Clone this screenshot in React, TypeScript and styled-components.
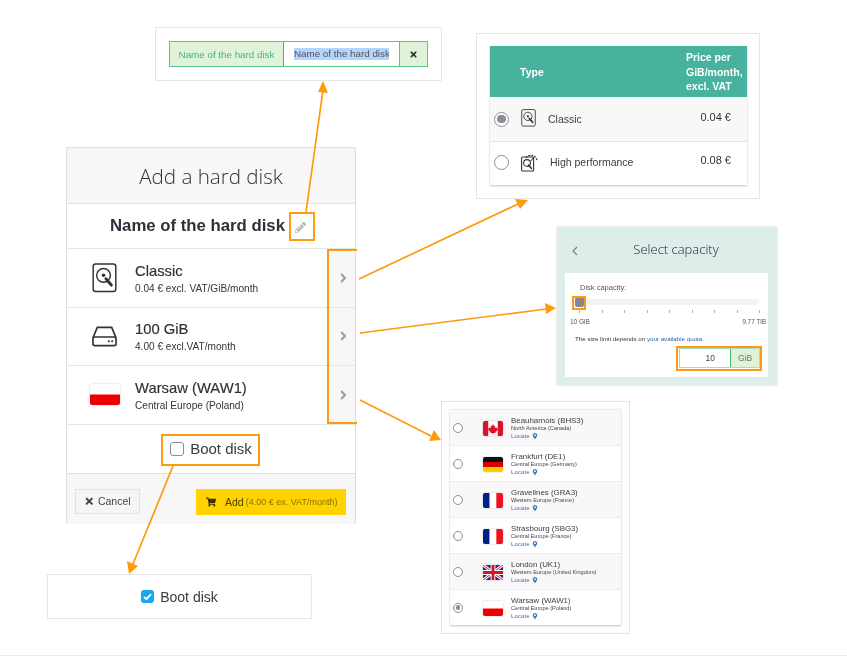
import styled, { createGlobalStyle } from "styled-components";
import { FaMapMarkerAlt, FaPencilAlt, FaShoppingCart, FaTimes } from "react-icons/fa";

const GlobalStyle = createGlobalStyle`
  html, body { margin: 0; padding: 0; background: #fff; }
  body { font-family: "Liberation Sans", Arial, sans-serif; color: #333; }
`;

const Canvas = styled.div`
  position: relative;
  width: 847px;
  height: 658px;
  overflow: hidden;
  background: #fff;
  filter: blur(0.3px);
`;

const PageRule = styled.div`
  position: absolute;
  left: 0;
  right: 0;
  top: 655px;
  height: 1px;
  background: #ebebeb;
`;

const Arrows = styled.svg`
  position: absolute;
  left: 0;
  top: 0;
  z-index: 3;
  pointer-events: none;
`;

/* ---- rename panel ---- */
const RenamePanel = styled.div`
  position: absolute;
  left: 155px;
  top: 27px;
  width: 287px;
  height: 54px;
  box-sizing: border-box;
  border: 1px solid #e3e8e6;
  border-right-color: #dcefe9;
  display: flex;
  align-items: center;
  padding-left: 13px;
`;

const RenameGroup = styled.div`
  display: flex;
  width: 259px;
  height: 26px;
  box-sizing: border-box;
  border: 1.5px solid #5cc48d;
  font-size: 9.8px;
`;

const RenameLabel = styled.div`
  width: 114px;
  flex: none;
  background: #dff3d8;
  color: #41b57e;
  display: flex;
  align-items: center;
  justify-content: center;
  border-right: 1.5px solid #3fb67a;
  box-sizing: border-box;
`;

const RenameInput = styled.div`
  width: 116px;
  flex: none;
  display: flex;
  align-items: center;
  padding-left: 10px;
  box-sizing: border-box;
  overflow: hidden;
  white-space: nowrap;
  color: #555;
  border-right: 1.5px solid #5cc48d;
`;

const Selection = styled.span`
  background: #b3d4fc;
  line-height: 12px;
  width: 95px;
  overflow: hidden;
  display: block;
`;

const RenameClose = styled.div`
  flex: 1;
  background: #dff3d8;
  display: flex;
  align-items: center;
  justify-content: center;
  font-size: 9px;
  color: #333;
`;

/* ---- type table ---- */
const TypePanel = styled.div`
  position: absolute;
  left: 476px;
  top: 33px;
  width: 284px;
  height: 166px;
  box-sizing: border-box;
  border: 1px solid #dde7e4;
  padding: 12px 12px 0 13px;
`;

const TypeTable = styled.div`
  width: 257px;
  box-shadow: 0 1px 2px rgba(0, 0, 0, 0.25);
`;

const TypeHeader = styled.div`
  height: 51px;
  box-sizing: border-box;
  background: #47b29d;
  color: #fff;
  font-size: 10.5px;
  font-weight: 700;
  line-height: 14.5px;
  display: flex;
  align-items: center;
  justify-content: space-between;
  padding: 1px 0 0 30px;
`;

const HeaderPrice = styled.div`
  width: 61px;
`;

const TypeRow = styled.div<{ $alt?: boolean }>`
  height: 44px;
  box-sizing: border-box;
  background: ${(p) => (p.$alt ? "#fff" : "#f8f8f8")};
  border-top: ${(p) => (p.$alt ? "1px solid #e4e4e4" : "0")};
  display: flex;
  align-items: center;
  padding-left: 4px;
  padding-bottom: ${(p) => (p.$alt ? "3px" : "0")};
  font-size: 10.5px;
  color: #3c3c46;
`;

const RowIcon = styled.div`
  width: 17px;
  height: 20px;
  margin-left: 12px;
  flex: none;
`;

const TypeName = styled.div<{ $wide?: boolean }>`
  flex: 1;
  margin-left: ${(p) => (p.$wide ? "12px" : "10px")};
`;

const TypePrice = styled.div`
  width: 42px;
  margin-right: 16px;
  padding-bottom: 4px;
  text-align: right;
  font-size: 11px;
  color: #333;
`;

const Radio = styled.span<{ $size: number; $checked?: boolean }>`
  box-sizing: border-box;
  flex: none;
  display: flex;
  align-items: center;
  justify-content: center;
  width: ${(p) => p.$size}px;
  height: ${(p) => p.$size}px;
  border: 1.5px solid #8b8d9d;
  border-radius: 50%;
  background: #fff;
  &::after {
    content: "";
    display: ${(p) => (p.$checked ? "block" : "none")};
    width: 62%;
    height: 62%;
    border-radius: 50%;
    background: #8b8d9d;
  }
`;

/* ---- main dialog ---- */
const Dialog = styled.div`
  position: absolute;
  left: 66px;
  top: 147px;
  width: 290px;
  height: 377px;
  box-sizing: border-box;
  border: 1px solid #dedede;
  border-bottom: 0;
  display: flex;
  flex-direction: column;
`;

const DialogTitle = styled.div`
  height: 56px;
  flex: none;
  box-sizing: border-box;
  background: #f7f7f7;
  border-bottom: 1px solid #e4e4e4;
  display: flex;
  align-items: center;
  justify-content: center;
  font-family: "Open Sans", sans-serif;
  font-weight: 300;
  font-size: 20.6px;
  color: #30303e;
`;

const NameRow = styled.div`
  height: 45px;
  flex: none;
  box-sizing: border-box;
  border-bottom: 1px solid #e4e4e4;
  display: flex;
  align-items: center;
  padding-left: 43px;
  font-size: 16.75px;
  font-weight: 700;
  color: #30303a;
`;

const NamePencil = styled.span`
  display: flex;
  margin-left: 10px;
  margin-top: 3px;
  font-size: 11px;
  color: #b9b9b9;
`;

const ChoiceRow = styled.div`
  height: 58.5px;
  flex: none;
  box-sizing: border-box;
  border-bottom: 1px solid #e6e6e6;
  display: flex;
  align-items: stretch;
`;

const ChoiceIcon = styled.div`
  width: 68px;
  flex: none;
  display: flex;
  align-items: center;
  justify-content: center;
  padding-left: 7px;
  box-sizing: border-box;
`;

const ChoiceText = styled.div`
  flex: 1;
  display: flex;
  flex-direction: column;
  justify-content: center;
  padding-top: 2px;
`;

const ChoiceTitle = styled.div`
  font-size: 14.8px;
  line-height: 19px;
  color: #2f2f38;
  -webkit-text-stroke: 0.15px #2f2f38;
`;

const ChoiceSub = styled.div`
  font-size: 10.1px;
  line-height: 15px;
  color: #33333c;
`;

const ChoiceArrow = styled.div`
  width: 27px;
  flex: none;
  background: #f7f7f7;
  display: flex;
  align-items: center;
  justify-content: center;
  padding-left: 3px;
  box-sizing: border-box;
`;

const BootRow = styled.div`
  height: 49px;
  flex: none;
  box-sizing: border-box;
  border-bottom: 1px solid #e0e0e0;
  display: flex;
  align-items: center;
  justify-content: center;
  gap: 6px;
  font-size: 15px;
  color: #3a3a45;
`;

const Unchecked = styled.span`
  width: 14px;
  height: 14px;
  box-sizing: border-box;
  border: 1.5px solid #8b8d9d;
  border-radius: 3px;
`;

const DialogFooter = styled.div`
  flex: 1;
  background: #f7f7f7;
  display: flex;
  align-items: flex-start;
  justify-content: space-between;
  padding: 15px 9px 0 8px;
`;

const CancelButton = styled.div`
  width: 65px;
  height: 25px;
  box-sizing: border-box;
  background: #f5f5f5;
  border: 1px solid #e2e2e2;
  display: flex;
  align-items: center;
  justify-content: center;
  gap: 3px;
  font-size: 10.5px;
  color: #444;
`;

const AddButton = styled.div`
  width: 150px;
  height: 26px;
  background: #ffd200;
  display: flex;
  align-items: center;
  padding-left: 10px;
  box-sizing: border-box;
  font-size: 10.5px;
  color: #4b4100;
`;

const AddPrice = styled.span`
  font-size: 9px;
  color: #8a7400;
  margin-left: 2px;
`;

const CartIcon = styled.span`
  display: flex;
  font-size: 10px;
  margin-right: 9px;
  color: #3a3300;
`;

/* ---- orange highlights ---- */
const Highlight = styled.div<{ $x: number; $y: number; $w: number; $h: number; $open?: boolean }>`
  position: absolute;
  z-index: 2;
  left: ${(p) => p.$x}px;
  top: ${(p) => p.$y}px;
  width: ${(p) => p.$w}px;
  height: ${(p) => p.$h}px;
  box-sizing: border-box;
  border: 2px solid #ff9a0d;
  border-right-width: ${(p) => (p.$open ? 0 : 2)}px;
`;

/* ---- capacity panel ---- */
const CapacityPanel = styled.div`
  position: absolute;
  left: 557px;
  top: 227px;
  width: 220px;
  height: 158px;
  box-sizing: border-box;
  background: #dcedea;
  box-shadow: 0 0 2px rgba(0, 0, 0, 0.2);
  padding: 0 9px 8px 8px;
  display: flex;
  flex-direction: column;
`;

const CapacityHead = styled.div`
  height: 46px;
  flex: none;
  position: relative;
  display: flex;
  align-items: center;
  justify-content: center;
  font-family: "Open Sans", sans-serif;
  font-weight: 300;
  font-size: 13px;
  color: #24242e;
  padding-left: 19px;
  padding-bottom: 2px;
  box-sizing: border-box;
`;

const BackIcon = styled.svg`
  position: absolute;
  left: 7px;
  top: 19px;
`;

const CapacityBody = styled.div`
  flex: 1;
  background: #fff;
  padding: 9px 2px 0 5px;
  font-size: 6.5px;
  color: #55555c;
`;

const CapacityLabel = styled.div`
  padding-left: 10px;
  font-size: 7.5px;
  line-height: 11px;
`;

const SliderTrack = styled.div`
  margin: 6px 0 0 9px;
  height: 6px;
  width: 180px;
  background: #f2f2f2;
  border-radius: 3px;
`;

const SliderTicks = styled.div`
  display: flex;
  justify-content: space-between;
  margin: 5px 6px 0 9px;
`;

const Tick = styled.span`
  width: 1px;
  height: 3px;
  background: #b0b0b0;
`;

const SliderEnds = styled.div`
  display: flex;
  justify-content: space-between;
  margin-top: 4px;
  line-height: 9px;
`;

const QuotaNote = styled.div`
  margin: 8px 0 0 5px;
  font-size: 6.2px;
  line-height: 9px;
  color: #333;
`;

const QuotaLink = styled.span`
  color: #2f62a8;
`;

const SizeInput = styled.div`
  display: flex;
  margin: 5px 0 0 109px;
  width: 81px;
  height: 20px;
  box-sizing: border-box;
  border: 1px solid #a8dcc0;
  font-size: 8.5px;
  color: #444;
`;

const SizeValue = styled.div`
  width: 51px;
  padding-right: 15px;
  box-sizing: border-box;
  text-align: right;
  line-height: 18px;
  border-right: 1px solid #3fb67a;
`;

const SizeUnit = styled.div`
  flex: 1;
  background: #dff3d8;
  text-align: center;
  line-height: 18px;
  color: #6a7a60;
`;

const SliderThumb = styled.div`
  position: absolute;
  z-index: 1;
  left: 575px;
  top: 297px;
  width: 9px;
  height: 10px;
  border-radius: 2px;
  background: #82869a;
`;

/* ---- location panel ---- */
const LocationPanel = styled.div`
  position: absolute;
  left: 441px;
  top: 401px;
  width: 189px;
  height: 233px;
  box-sizing: border-box;
  border: 1px solid #e1e4e3;
  padding: 7px 8px 0 8px;
`;

const LocationList = styled.div`
  width: 171px;
  box-shadow: 0 1px 2px rgba(0, 0, 0, 0.25);
`;

const LocationRow = styled.div<{ $alt?: boolean }>`
  height: 36px;
  box-sizing: border-box;
  background: ${(p) => (p.$alt ? "#fff" : "#f8f8f8")};
  border-top: 1px solid #ececec;
  display: flex;
  align-items: center;
  padding-left: 3px;
`;

const FlagSmall = styled.div`
  width: 20px;
  height: 15px;
  margin: 1px 8px 0 20px;
  flex: none;
  display: flex;
`;

const LocationText = styled.div`
  display: flex;
  flex-direction: column;
  white-space: nowrap;
  padding-top: 2px;
`;

const LocationName = styled.div`
  font-size: 7.9px;
  line-height: 8px;
  color: #3d3d46;
`;

const LocationSub = styled.div`
  font-size: 5.6px;
  line-height: 7px;
  color: #44444c;
`;

const LocateLink = styled.div`
  display: flex;
  align-items: center;
  gap: 2px;
  font-size: 6.2px;
  line-height: 8px;
  color: #3d76bc;
`;

/* ---- checked boot panel ---- */
const BootPanel = styled.div`
  position: absolute;
  left: 47px;
  top: 574px;
  width: 265px;
  height: 45px;
  box-sizing: border-box;
  border: 1px solid #e6e6e6;
  border-right-color: #dcefe9;
  display: flex;
  align-items: center;
  justify-content: center;
  gap: 6px;
  font-size: 14px;
  color: #3a3a45;
`;

const BootCheck = styled.span`
  width: 13px;
  height: 13px;
  border-radius: 3px;
  background: #18a7f0;
  display: flex;
`;

function ClassicDisk({ size = 25 }: { size?: number }) {
  return (
    <svg width={size} height={size * 1.18} viewBox="0 0 25 30" fill="none" stroke="#333">
      <rect x="1" y="1" width="23" height="28" rx="2.5" strokeWidth="1.5" />
      <circle cx="11.5" cy="12.5" r="7" strokeWidth="1.5" />
      <circle cx="11.5" cy="12.5" r="1.8" fill="#333" stroke="none" />
      <path d="M14 16l5.5 6.5" strokeWidth="3" strokeLinecap="round" />
    </svg>
  );
}

function FastDisk() {
  return (
    <svg width="17" height="20" viewBox="0 0 17 20" fill="none" stroke="#333">
      <rect x="0.6" y="5" width="12" height="14" rx="1" strokeWidth="1.1" fill="#fff" />
      <circle cx="6" cy="11" r="3.4" strokeWidth="1.1" />
      <path d="M7.5 13l3 3.5" strokeWidth="1.6" strokeLinecap="round" />
      <path d="M5 6a6 6 0 0 1 11 3" strokeWidth="1.2" strokeDasharray="2 1" />
      <path d="M12 6l-2 3" strokeWidth="1" />
    </svg>
  );
}

function DriveIcon() {
  return (
    <svg width="25" height="22" viewBox="0 0 26 22" fill="none" stroke="#333" strokeWidth="1.7">
      <path d="M1 13L5.5 2h15L25 13" />
      <rect x="1" y="12" width="24" height="9" rx="2" />
      <circle cx="17.5" cy="16.5" r="1.1" fill="#333" stroke="none" />
      <circle cx="21" cy="16.5" r="1.1" fill="#333" stroke="none" />
    </svg>
  );
}

type FlagCode = "CA" | "DE" | "FR" | "GB" | "PL";

function Flag({ code, width, height }: { code: FlagCode; width: number; height: number }) {
  return (
    <svg width={width} height={height} viewBox="0 0 21 15" preserveAspectRatio="none" style={{ borderRadius: 2, boxShadow: "0 0 1.5px rgba(0,0,0,.35)" }}>
      {code === "PL" && (
        <>
          <rect width="21" height="7.5" fill="#fff" />
          <rect y="7.5" width="21" height="7.5" fill="#ee0000" />
        </>
      )}
      {code === "DE" && (
        <>
          <rect width="21" height="5" fill="#111" />
          <rect y="5" width="21" height="5" fill="#dd0000" />
          <rect y="10" width="21" height="5" fill="#ffce00" />
        </>
      )}
      {code === "FR" && (
        <>
          <rect width="7" height="15" fill="#001f8f" />
          <rect x="7" width="7" height="15" fill="#fff" />
          <rect x="14" width="7" height="15" fill="#ee1122" />
        </>
      )}
      {code === "CA" && (
        <>
          <rect width="21" height="15" fill="#fff" />
          <rect width="5.5" height="15" fill="#d8142a" />
          <rect x="15.5" width="5.5" height="15" fill="#d8142a" />
          <path d="M10.5 3l1 2 1.3-.5-.4 2.6 1.6-.9.4 1 1.2-.2-.6 1.7.6.5-2.6 1.8.2 1h-2.3v1.6h-.8v-1.6H7.8l.2-1-2.6-1.8.6-.5-.6-1.7 1.2.2.4-1 1.6.9-.4-2.6 1.3.5z" fill="#d8142a" />
        </>
      )}
      {code === "GB" && (
        <>
          <rect width="21" height="15" fill="#1c2f78" />
          <path d="M0 0l21 15M21 0L0 15" stroke="#fff" strokeWidth="3" />
          <path d="M0 0l21 15M21 0L0 15" stroke="#d8142a" strokeWidth="1" />
          <path d="M10.5 0v15M0 7.5h21" stroke="#fff" strokeWidth="5" />
          <path d="M10.5 0v15M0 7.5h21" stroke="#d8142a" strokeWidth="3" />
        </>
      )}
    </svg>
  );
}

function Chevron() {
  return (
    <svg width="7" height="10" viewBox="0 0 7 10" fill="none" stroke="#9a9a9a" strokeWidth="2">
      <path d="M1.2 1l3.8 4-3.8 4" />
    </svg>
  );
}

const locations: { name: string; sub: string; flag: FlagCode; alt: boolean; checked?: boolean }[] = [
  { name: "Beauharnois (BHS3)", sub: "North America (Canada)", flag: "CA", alt: false },
  { name: "Frankfurt (DE1)", sub: "Central Europe (Germany)", flag: "DE", alt: true },
  { name: "Gravelines (GRA3)", sub: "Western Europe (France)", flag: "FR", alt: false },
  { name: "Strasbourg (SBG3)", sub: "Central Europe (France)", flag: "FR", alt: true },
  { name: "London (UK1)", sub: "Western Europe (United Kingdom)", flag: "GB", alt: false },
  { name: "Warsaw (WAW1)", sub: "Central Europe (Poland)", flag: "PL", alt: true, checked: true },
];

const arrows = [
  { x1: 306, y1: 212, x2: 323, y2: 90, tip: "323,81 318,92 328,93" },
  { x1: 359, y1: 279, x2: 518, y2: 204, tip: "528,200 515,199 520,209" },
  { x1: 360, y1: 333, x2: 546, y2: 309, tip: "556,308 545,303 546,314" },
  { x1: 360, y1: 400, x2: 431, y2: 436, tip: "441,440 434,430 429,441" },
  { x1: 173, y1: 466, x2: 133, y2: 564, tip: "129,574 127,561 138,566" },
];

export default function App() {
  return (
    <>
      <GlobalStyle />
      <Canvas>
        <RenamePanel>
          <RenameGroup>
            <RenameLabel>Name of the hard disk</RenameLabel>
            <RenameInput>
              <Selection>Name of the hard disk</Selection>
            </RenameInput>
            <RenameClose>
              <FaTimes />
            </RenameClose>
          </RenameGroup>
        </RenamePanel>

        <TypePanel>
          <TypeTable>
            <TypeHeader>
              <div>Type</div>
              <HeaderPrice>
                Price per
                <br />
                GiB/month,
                <br />
                excl. VAT
              </HeaderPrice>
            </TypeHeader>
            <TypeRow>
              <Radio $size={15} $checked />
              <RowIcon>
                <ClassicDisk size={15} />
              </RowIcon>
              <TypeName>Classic</TypeName>
              <TypePrice>0.04 €</TypePrice>
            </TypeRow>
            <TypeRow $alt>
              <Radio $size={15} />
              <RowIcon>
                <FastDisk />
              </RowIcon>
              <TypeName $wide>High performance</TypeName>
              <TypePrice>0.08 €</TypePrice>
            </TypeRow>
          </TypeTable>
        </TypePanel>

        <Dialog>
          <DialogTitle>Add a hard disk</DialogTitle>
          <NameRow>
            Name of the hard disk
            <NamePencil>
              <FaPencilAlt />
            </NamePencil>
          </NameRow>
          <ChoiceRow>
            <ChoiceIcon>
              <ClassicDisk />
            </ChoiceIcon>
            <ChoiceText>
              <ChoiceTitle>Classic</ChoiceTitle>
              <ChoiceSub>0.04 € excl. VAT/GiB/month</ChoiceSub>
            </ChoiceText>
            <ChoiceArrow>
              <Chevron />
            </ChoiceArrow>
          </ChoiceRow>
          <ChoiceRow>
            <ChoiceIcon>
              <DriveIcon />
            </ChoiceIcon>
            <ChoiceText>
              <ChoiceTitle>100 GiB</ChoiceTitle>
              <ChoiceSub>4.00 € excl.VAT/month</ChoiceSub>
            </ChoiceText>
            <ChoiceArrow>
              <Chevron />
            </ChoiceArrow>
          </ChoiceRow>
          <ChoiceRow>
            <ChoiceIcon>
              <Flag code="PL" width={30} height={21} />
            </ChoiceIcon>
            <ChoiceText>
              <ChoiceTitle>Warsaw (WAW1)</ChoiceTitle>
              <ChoiceSub>Central Europe (Poland)</ChoiceSub>
            </ChoiceText>
            <ChoiceArrow>
              <Chevron />
            </ChoiceArrow>
          </ChoiceRow>
          <BootRow>
            <Unchecked />
            Boot disk
          </BootRow>
          <DialogFooter>
            <CancelButton>
              <FaTimes />
              Cancel
            </CancelButton>
            <AddButton>
              <CartIcon>
                <FaShoppingCart />
              </CartIcon>
              Add
              <AddPrice>(4.00 € ex. VAT/month)</AddPrice>
            </AddButton>
          </DialogFooter>
        </Dialog>

        <Highlight $x={289} $y={212} $w={26} $h={29} />
        <Highlight $x={327} $y={249} $w={30} $h={175} $open />
        <Highlight $x={161} $y={434} $w={99} $h={32} />

        <CapacityPanel>
          <CapacityHead>
            <BackIcon width="6" height="10" viewBox="0 0 6 10" fill="none" stroke="#7a7f85" strokeWidth="1.2">
              <path d="M5 1L1 5l4 4" />
            </BackIcon>
            Select capacity
          </CapacityHead>
          <CapacityBody>
            <CapacityLabel>Disk capacity:</CapacityLabel>
            <SliderTrack />
            <SliderTicks>
              {Array.from({ length: 9 }, (_, i) => (
                <Tick key={i} />
              ))}
            </SliderTicks>
            <SliderEnds>
              <span>10 GiB</span>
              <span>9.77 TiB</span>
            </SliderEnds>
            <QuotaNote>
              The size limit depends on <QuotaLink>your available quota.</QuotaLink>
            </QuotaNote>
            <SizeInput>
              <SizeValue>10</SizeValue>
              <SizeUnit>GiB</SizeUnit>
            </SizeInput>
          </CapacityBody>
        </CapacityPanel>
        <SliderThumb />
        <Highlight $x={572} $y={296} $w={14} $h={14} />
        <Highlight $x={676} $y={346} $w={86} $h={25} />

        <LocationPanel>
          <LocationList>
            {locations.map((l) => (
              <LocationRow key={l.name} $alt={l.alt}>
                <Radio $size={10} $checked={l.checked} />
                <FlagSmall>
                  <Flag code={l.flag} width={20} height={15} />
                </FlagSmall>
                <LocationText>
                  <LocationName>{l.name}</LocationName>
                  <LocationSub>{l.sub}</LocationSub>
                  <LocateLink>
                    Locate <FaMapMarkerAlt size={6} />
                  </LocateLink>
                </LocationText>
              </LocationRow>
            ))}
          </LocationList>
        </LocationPanel>

        <BootPanel>
          <BootCheck>
            <svg width="13" height="13" viewBox="0 0 13 13" fill="none" stroke="#fff" strokeWidth="1.8">
              <path d="M3 6.8l2.4 2.4L10 4.2" />
            </svg>
          </BootCheck>
          Boot disk
        </BootPanel>

        <Arrows width="847" height="658" viewBox="0 0 847 658">
          {arrows.map((a) => (
            <g key={a.tip}>
              <line x1={a.x1} y1={a.y1} x2={a.x2} y2={a.y2} stroke="#ff9a0d" strokeWidth="1.7" />
              <polygon points={a.tip} fill="#ff9a0d" />
            </g>
          ))}
        </Arrows>

        <PageRule />
      </Canvas>
    </>
  );
}
